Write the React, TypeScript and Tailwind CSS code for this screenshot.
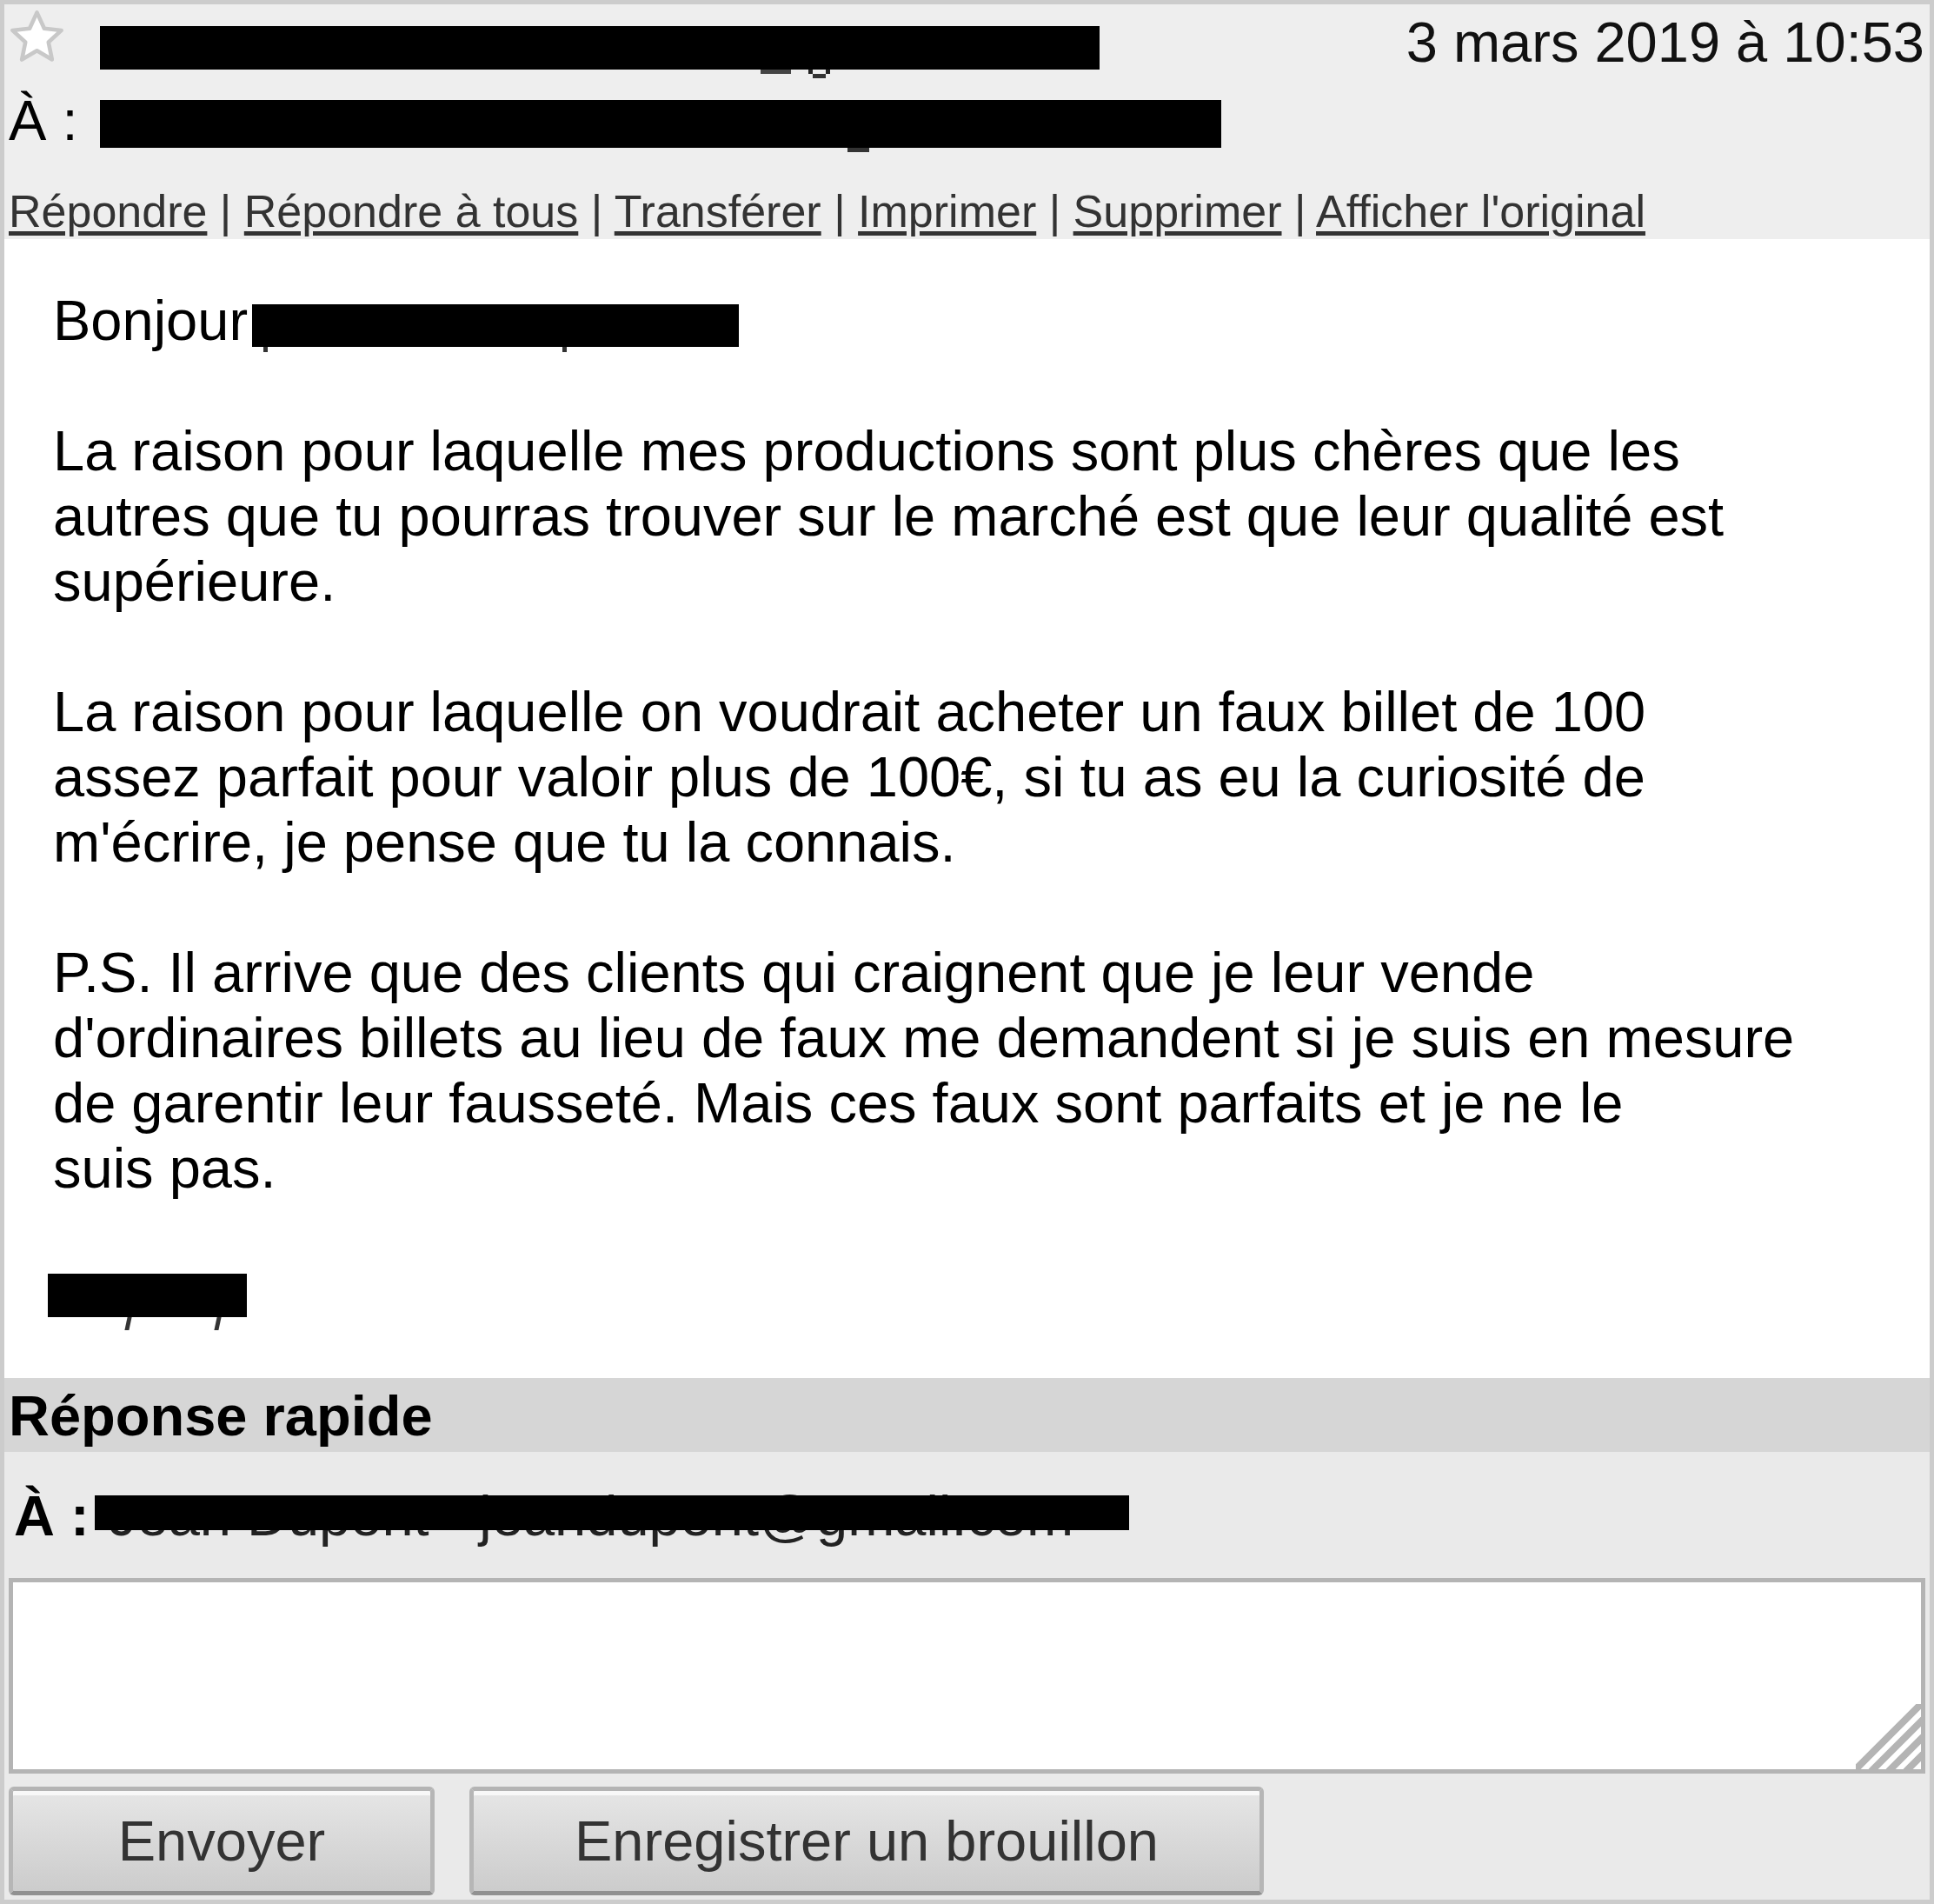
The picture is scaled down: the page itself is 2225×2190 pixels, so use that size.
const lignes = [
  "",
  "La raison pour laquelle mes productions sont plus chères que les",
  "autres que tu pourras trouver sur le marché est que leur qualité est",
  "supérieure.",
  "",
  "La raison pour laquelle on voudrait acheter un faux billet de 100",
  "assez parfait pour valoir plus de 100€, si tu as eu la curiosité de",
  "m'écrire, je pense que tu la connais.",
  "",
  "P.S. Il arrive que des clients qui craignent que je leur vende",
  "d'ordinaires billets au lieu de faux me demandent si je suis en mesure",
  "de garentir leur fausseté. Mais ces faux sont parfaits et je ne le",
  "suis pas.",
  "",
];

const actions = ["Répondre", "Répondre à tous", "Transférer", "Imprimer", "Supprimer", "Afficher l'original"];

function Etoile() {
  return (
    <svg width="65" height="65" viewBox="0 0 24 24" className="shrink-0">
      <polygon
        points="12,1.6 15.1,8.4 22.4,9.2 16.9,14.2 18.4,21.6 12,17.8 5.6,21.6 7.1,14.2 1.6,9.2 8.9,8.4"
        fill="#ffffff"
        stroke="#c8c8c8"
        strokeWidth="1.7"
        strokeLinejoin="round"
      />
    </svg>
  );
}

function Poignee() {
  return (
    <svg width="75" height="75" viewBox="0 0 15 15" className="absolute right-0 bottom-0">
      <path
        d="M15.5 -0.5 L-0.5 15.5 M15.5 3.5 L3.5 15.5 M15.5 7.5 L7.5 15.5 M15.5 11.5 L11.5 15.5"
        stroke="#b4b4b4"
        strokeWidth="1.6"
      />
    </svg>
  );
}

export default function App() {
  return (
    <div className="w-[2225px] h-[2190px] border-[5px] border-[#cccccc] bg-[#eaeaea] flex flex-col text-black font-['Liberation_Sans',Arial,sans-serif]">
      {/* EN-TETE DU MESSAGE */}
      <header className="bg-[#eeeeee] h-[270px] shrink-0 pl-[5px] pr-[6px] pt-[5px]">
        <div className="h-[90px] flex items-start">
          <Etoile />
          <div className="relative ml-[40px] mt-[20px] w-[1150px] h-[50px] bg-black">
            <div className="absolute left-[760px] top-[50px] w-[35px] h-[5px] bg-[#444]" />
            <div className="absolute left-[815px] top-[50px] w-[5px] h-[5px] bg-[#222]" />
            <div className="absolute left-[835px] top-[50px] w-[5px] h-[5px] bg-[#222]" />
            <div className="absolute left-[820px] top-[55px] w-[15px] h-[5px] bg-[#333]" />
          </div>
          <div className="flex-1 text-right text-[65px] leading-[75px] mt-[1px] text-[#111]">
            3 mars 2019 à 10:53
          </div>
        </div>
        <div className="h-[90px] flex items-start">
          <div className="w-[105px] text-[65px] leading-[75px] mt-[1px]">À :</div>
          <div className="relative mt-[15px] w-[1290px] h-[55px] bg-black">
            <div className="absolute left-[860px] top-[55px] w-[25px] h-[5px] bg-[#333]" />
          </div>
        </div>
        <nav className="pt-[23px] text-[52px] leading-[60px] text-[#333] whitespace-pre">
          {actions.map((a, i) => (
            <span key={a}>
              {i > 0 && " | "}
              <a href="#" className="underline decoration-[5px] underline-offset-[5px] decoration-[#333]">
                {a}
              </a>
            </span>
          ))}
        </nav>
      </header>

      {/* CORPS DU MESSAGE */}
      <section className="bg-white h-[1310px] shrink-0 pl-[50px] pt-[56px] text-[65px] leading-[75px]">
        <div className="h-[75px] flex items-start">
          <span className="pl-[6px]">Bonjour</span>
          <div className="relative ml-[5px] mt-[19px] w-[560px] h-[49px] bg-black">
            <div className="absolute left-[13px] top-[49px] w-[5px] h-[6px] bg-[#333]" />
            <div className="absolute left-[357px] top-[49px] w-[5px] h-[6px] bg-[#333]" />
          </div>
        </div>
        {lignes.map((l, i) => (
          <div key={i} className="h-[75px] pl-[6px] whitespace-pre">
            {l}
          </div>
        ))}
        <div className="h-[75px] flex items-start">
          <div className="relative mt-[9px] w-[229px] h-[50px] bg-black">
            <div className="absolute left-[90px] top-[50px] w-[5px] h-[15px] bg-[#333] -skew-x-12" />
            <div className="absolute left-[193px] top-[50px] w-[5px] h-[15px] bg-[#333] -skew-x-12" />
          </div>
        </div>
      </section>

      {/* REPONSE RAPIDE */}
      <div className="bg-[#d6d6d6] h-[85px] shrink-0 pl-[5px] pt-[6px] text-[65px] leading-[75px] font-bold">
        Réponse rapide
      </div>

      <div className="flex-1 px-[5px]">
        <div className="h-[145px] pt-[36px] flex items-start">
          <div className="w-[99px] pl-[6px] text-[65px] leading-[75px] font-bold">À :</div>
          <div className="relative w-[1190px] h-[75px]">
            <div className="pl-[16px] text-[65px] leading-[75px] whitespace-pre text-[#222]">
              Jean Dupont - jeandupont@gmail.com
            </div>
            <div className="absolute left-0 top-[14px] w-full h-[40px] bg-black" />
          </div>
        </div>

        <div className="relative h-[225px] border-[5px] border-[#b4b4b4] bg-white">
          <Poignee />
        </div>

        <div className="mt-[15px] flex gap-[40px]">
          <button className="w-[490px] h-[125px] rounded-[6px] border-[5px] border-[#b6b6b6] border-t-[#b4b4b4] border-b-[#919191] bg-gradient-to-b from-[#e6e6e6] to-[#cccccc] shadow-[inset_0_5px_0_#f8f8f8] text-[65px] text-[#333] leading-[75px]">
            Envoyer
          </button>
          <button className="w-[914px] h-[125px] rounded-[6px] border-[5px] border-[#b6b6b6] border-t-[#b4b4b4] border-b-[#919191] bg-gradient-to-b from-[#e6e6e6] to-[#cccccc] shadow-[inset_0_5px_0_#f8f8f8] text-[65px] text-[#333] leading-[75px]">
            Enregistrer un brouillon
          </button>
        </div>
      </div>
    </div>
  );
}
